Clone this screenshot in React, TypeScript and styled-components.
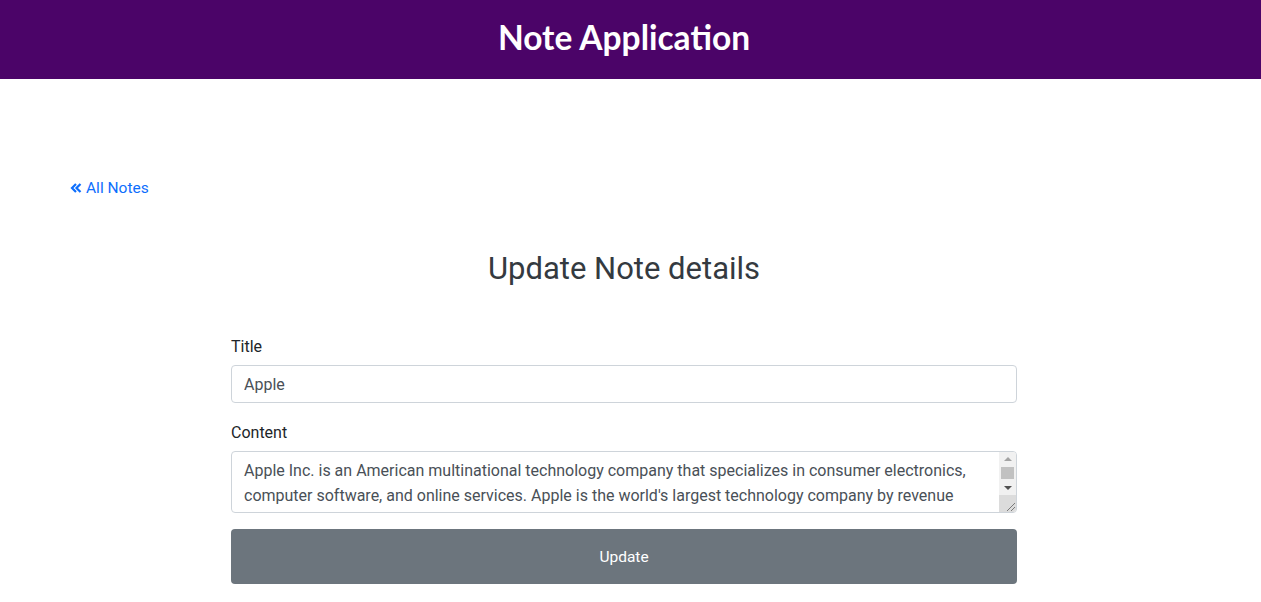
import styled, { createGlobalStyle } from "styled-components";

const GlobalStyle = createGlobalStyle`
  body {
    margin: 0;
    background: #fff;
    font-family: Roboto, "Liberation Sans", sans-serif;
    color: #212529;
  }
  * { box-sizing: border-box; }
`;

const Header = styled.header`
  height: 79px;
  padding-right: 13px;
  background-color: #4b0468;
  display: flex;
  justify-content: center;
  align-items: center;
`;
const Brand = styled.h1`
  margin: 0;
  color: #fff;
  font-family: Lato, sans-serif;
  font-weight: 700;
  font-size: 33.5px;
  padding-bottom: 6px;
`;
const Main = styled.main`
  width: 1248px;
  padding-top: 100px;
`;
const BackRow = styled.div`
  padding-left: 70px;
`;
const BackLink = styled.a`
  display: inline-flex;
  align-items: center;
  gap: 4px;
  color: #0d6efd;
  font-size: 15.5px;
  text-decoration: none;
`;
const Wrapper = styled.div`
  width: 786px;
  margin: 0 auto;
`;
const Title = styled.h2`
  margin: 52px 0 50px;
  text-align: center;
  font-weight: 400;
  font-size: 31px;
  color: #343a40;
`;
const Field = styled.div`
  margin-bottom: 20px;
`;
const Label = styled.label`
  display: block;
  font-size: 16px;
  margin-bottom: 9px;
`;
const Input = styled.input`
  display: block;
  width: 100%;
  height: 38px;
  padding: 6px 12px;
  font-family: inherit;
  font-size: 16px;
  color: #495057;
  border: 1px solid #ced4da;
  border-radius: 4px;
`;
const AreaBox = styled.div`
  position: relative;
`;
const TextArea = styled.textarea`
  display: block;
  width: 100%;
  height: 62px;
  padding: 6px 29px 6px 12px;
  font-family: inherit;
  font-size: 16px;
  line-height: 25px;
  color: #495057;
  border: 1px solid #ced4da;
  border-radius: 4px;
  resize: none;
  overflow: hidden;
`;
const ScrollBar = styled.div`
  position: absolute;
  top: 1px;
  right: 1px;
  bottom: 1px;
  width: 17px;
  display: flex;
  flex-direction: column;
  background: #f1f1f1;
  border-top-right-radius: 3px;
  border-bottom-right-radius: 3px;
  overflow: hidden;
`;
const Arrow = styled.div<{ $dark?: boolean }>`
  height: 14px;
  display: flex;
  align-items: center;
  justify-content: center;
  color: ${(p) => (p.$dark ? "#505050" : "#a3a3a3")};
`;
const Track = styled.div`
  flex: 1;
  padding: 1px 2px;
`;
const Thumb = styled.div`
  height: 12px;
  background: #c1c1c1;
`;
const Resizer = styled.div`
  height: 17px;
  background: #dcdcdc;
  display: flex;
  align-items: flex-end;
  justify-content: flex-end;
`;
const Button = styled.button`
  display: block;
  width: 100%;
  height: 55px;
  margin-top: -4px;
  border: none;
  border-radius: 4px;
  background-color: #6c757d;
  color: #fff;
  font-family: inherit;
  font-size: 15.5px;
`;

const content =
  "Apple Inc. is an American multinational technology company that specializes in consumer electronics, computer software, and online services. Apple is the world's largest technology company by revenue (totaling $274.5 billion in 2020) and, since January 2021, the world's most valuable company.";

export default function App() {
  return (
    <>
      <GlobalStyle />
      <Header>
        <Brand>Note Application</Brand>
      </Header>
      <Main>
        <BackRow>
          <BackLink href="#">
            <svg width="12" height="12" viewBox="0 0 12 12" fill="none" stroke="currentColor" strokeWidth="2.2">
              <path d="M6 2 L2 6 L6 10 M10.5 2 L6.5 6 L10.5 10" />
            </svg>
            All Notes
          </BackLink>
        </BackRow>
        <Wrapper>
          <Title>Update Note details</Title>
          <Field>
            <Label>Title</Label>
            <Input defaultValue="Apple" />
          </Field>
          <Field>
            <Label>Content</Label>
            <AreaBox>
              <TextArea defaultValue={content} />
              <ScrollBar>
                <Arrow>
                  <svg width="8" height="4" viewBox="0 0 8 4">
                    <path d="M0 4 L4 0 L8 4 Z" fill="currentColor" />
                  </svg>
                </Arrow>
                <Track>
                  <Thumb />
                </Track>
                <Arrow $dark>
                  <svg width="8" height="4" viewBox="0 0 8 4">
                    <path d="M0 0 L4 4 L8 0 Z" fill="currentColor" />
                  </svg>
                </Arrow>
                <Resizer>
                  <svg width="10" height="10" viewBox="0 0 10 10" stroke="#7a7a7a" strokeWidth="1">
                    <path d="M1 9 L9 1 M5 9 L9 5" />
                  </svg>
                </Resizer>
              </ScrollBar>
            </AreaBox>
          </Field>
          <Button>Update</Button>
        </Wrapper>
      </Main>
    </>
  );
}
